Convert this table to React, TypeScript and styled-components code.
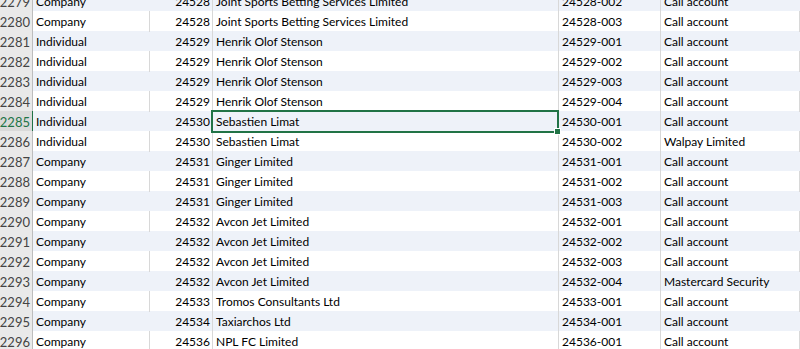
import styled, { createGlobalStyle } from "styled-components"

const GlobalStyle = createGlobalStyle`
    html, body {
        margin: 0;
        padding: 0;
        background: #ffffff;
        overflow: hidden;
    }
`

const rows = [
    [2279, 'Company', 24528, 'Joint Sports Betting Services Limited', '24528-002', 'Call account'],
    [2280, 'Company', 24528, 'Joint Sports Betting Services Limited', '24528-003', 'Call account'],
    [2281, 'Individual', 24529, 'Henrik Olof Stenson', '24529-001', 'Call account'],
    [2282, 'Individual', 24529, 'Henrik Olof Stenson', '24529-002', 'Call account'],
    [2283, 'Individual', 24529, 'Henrik Olof Stenson', '24529-003', 'Call account'],
    [2284, 'Individual', 24529, 'Henrik Olof Stenson', '24529-004', 'Call account'],
    [2285, 'Individual', 24530, 'Sebastien Limat', '24530-001', 'Call account'],
    [2286, 'Individual', 24530, 'Sebastien Limat', '24530-002', 'Walpay Limited'],
    [2287, 'Company', 24531, 'Ginger Limited', '24531-001', 'Call account'],
    [2288, 'Company', 24531, 'Ginger Limited', '24531-002', 'Call account'],
    [2289, 'Company', 24531, 'Ginger Limited', '24531-003', 'Call account'],
    [2290, 'Company', 24532, 'Avcon Jet Limited', '24532-001', 'Call account'],
    [2291, 'Company', 24532, 'Avcon Jet Limited', '24532-002', 'Call account'],
    [2292, 'Company', 24532, 'Avcon Jet Limited', '24532-003', 'Call account'],
    [2293, 'Company', 24532, 'Avcon Jet Limited', '24532-004', 'Mastercard Security'],
    [2294, 'Company', 24533, 'Tromos Consultants Ltd', '24533-001', 'Call account'],
    [2295, 'Company', 24534, 'Taxiarchos Ltd', '24534-001', 'Call account'],
    [2296, 'Company', 24536, 'NPL FC Limited', '24536-001', 'Call account'],
] as const

const SELECTED = 2285

const Sheet = styled.div`
    margin-top: -9px;
    width: 800px;
    font-family: "Lato", "Noto Sans", sans-serif;
    font-size: 12px;
    color: #000000;
`

const Row = styled.div<{ banded: boolean }>`
    display: grid;
    grid-template-columns: 33px 117px 63px 346px 102px 1fr;
    height: 20px;
    background: ${({ banded }) => (banded ? '#eef2f9' : '#ffffff')};
`

const RowHeader = styled.div<{ active: boolean }>`
    display: flex;
    align-items: center;
    justify-content: flex-end;
    padding: 1px 2px 0 0;
    background: ${({ active }) => (active ? '#dadada' : '#e9e9e9')};
    color: ${({ active }) => (active ? '#217346' : '#444444')};
    border-right: 1px solid ${({ active }) => (active ? '#217346' : '#bdbdbd')};
    box-sizing: border-box;
    font-size: 13px;
    line-height: 20px;
`

const Cell = styled.div<{ align?: 'left' | 'right'; lined: boolean }>`
    position: relative;
    display: flex;
    align-items: center;
    justify-content: ${({ align }) => (align === 'right' ? 'flex-end' : 'flex-start')};
    padding: 1px 2px 0 3px;
    white-space: nowrap;
    overflow: visible;
    box-sizing: border-box;
    border-right: 1px solid ${({ lined }) => (lined ? '#d8d8d8' : 'transparent')};
    line-height: 20px;
`

const Selection = styled.div`
    position: absolute;
    left: -2px;
    top: -1px;
    right: -1px;
    bottom: -1px;
    border: 2px solid #217346;
    pointer-events: none;
    z-index: 2;
`

const FillHandle = styled.div`
    position: absolute;
    right: -4px;
    bottom: -4px;
    width: 5px;
    height: 5px;
    background: #217346;
    border: 1px solid #ffffff;
`

export default function App() {
    return (
        <>
            <GlobalStyle />
            <Sheet>
                {rows.map(([num, kind, id, name, account, desc]) => {
                    const banded = num % 2 === 1
                    const active = num === SELECTED
                    return (
                        <Row key={num} banded={banded}>
                            <RowHeader active={active}>{num}</RowHeader>
                            <Cell lined={!banded}>{kind}</Cell>
                            <Cell align="right" lined>{id}</Cell>
                            <Cell lined>
                                {name}
                                {active && (
                                    <Selection>
                                        <FillHandle />
                                    </Selection>
                                )}
                            </Cell>
                            <Cell lined>{account}</Cell>
                            <Cell lined={!banded}>{desc}</Cell>
                        </Row>
                    )
                })}
            </Sheet>
        </>
    )
}
